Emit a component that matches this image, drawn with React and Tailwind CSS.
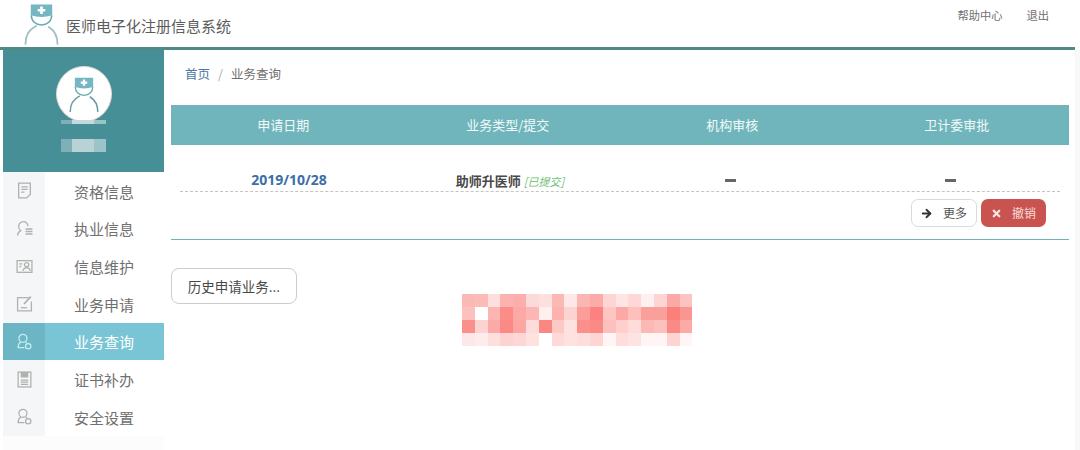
import React from "react";
import { ArrowRight, X } from "lucide-react";

const DoctorLogo = ({ className, stroke = "#9dbfc4" }) => (
  <svg viewBox="0 0 36 42" className={className} fill="none">
    <path d="M7 1h22v11q-11 3.500-22 0z" fill="#74b6c2" />
    <path d="M16.600 3h2.800v2.500h2.500v2.600h-2.500v2.500h-2.800V8.100h-2.500V5.500h2.500z" fill="#fff" />
    <path d="M7.500 12c0 6 4.500 10 10.500 10s10.500-4 10.500-10" stroke="#6aa9b4" strokeWidth="1.600" />
    <path d="M1.500 41.500c0-9.500 5-15.500 11-18.500" stroke={stroke} strokeWidth="1.800" strokeLinecap="round" />
    <path d="M34.500 41.500c0-9-3.500-14-9-17.500" stroke={stroke} strokeWidth="1.800" strokeLinecap="round" />
  </svg>
);

const iconProps = {
  viewBox: "0 0 16 16",
  fill: "none",
  stroke: "currentColor",
  strokeWidth: 1.200,
  className: "w-[17px] h-[17px]",
};

const DocIcon = () => (
  <svg {...iconProps}>
    <path d="M2.500 1h11v10.500l-3.500 3.500h-7.500z" />
    <path d="M5 4.500h6M5 7h6M5 9.500h3" />
  </svg>
);
const HeadListIcon = () => (
  <svg {...iconProps}>
    <path d="M1.500 14.500c0-2 1.500-3.700 3-4.500C3.300 9 2.500 7.500 2.500 6c0-2.500 2-4.500 4.300-4.500s4.200 1.800 4.500 4.300" />
    <path d="M9 8.500h6.500M9 10.800h6.500M9 13.200h6.500" strokeWidth="1.500" />
  </svg>
);
const CardIcon = () => (
  <svg {...iconProps}>
    <rect x="1" y="2.500" width="14" height="11" />
    <path d="M3 5.500h3M3 8h2" />
    <circle cx="10" cy="6.300" r="2" />
    <path d="M6.500 12c.5-2 2-3 3.500-3s3 1 3.500 3" />
  </svg>
);
const PenIcon = () => (
  <svg {...iconProps}>
    <path d="M12 2.500H1.500v12.500h13V6" />
    <path d="M7.500 8.500 14 1.500" strokeWidth="1.600" />
    <path d="M4.500 12h6" />
  </svg>
);
const UserGearIcon = () => (
  <svg {...iconProps}>
    <circle cx="6.500" cy="5" r="3.800" />
    <path d="M4.500 8.500C2.800 9.500 2 11 2 13.800h6" />
    <path d="M9 8.500c.8.400 1.300.900 1.700 1.500" />
    <circle cx="11.500" cy="12.500" r="2.500" />
  </svg>
);
const SaveIcon = () => (
  <svg {...iconProps}>
    <rect x="2" y="1" width="12" height="14" />
    <path d="M5 1v4.500h6V1" fill="currentColor" />
    <path d="M4.500 8.500h7M4.500 10.500h7M4.500 12.500h7" />
  </svg>
);

const menuItems = [
  { icon: <DocIcon />, label: "资格信息" },
  { icon: <HeadListIcon />, label: "执业信息" },
  { icon: <CardIcon />, label: "信息维护" },
  { icon: <PenIcon />, label: "业务申请" },
  { icon: <UserGearIcon />, label: "业务查询", active: true },
  { icon: <SaveIcon />, label: "证书补办" },
  { icon: <UserGearIcon />, label: "安全设置" },
];

const columns = ["申请日期", "业务类型/提交", "机构审核", "卫计委审批"];

// blurred block in the screenshot
const mosaic = [
  ["#fbb9b6", "#fbbcb9", "#fde0de", "#fcb3b0", "#fbaeab", "#fddada", "#fde0de", "#fbb8b5", "#fde8e7", "#fbb5b2", "#fbaba8", "#fdd5d3", "#fee4e3", "#fdd8d6", "#fef0ef", "#fdd5d3", "#fba9a6", "#fcc4c1"],
  ["#fcc0bd", "#ffffff", "#fcb5b2", "#fb8c88", "#fca9a6", "#fcb6b3", "#fff0ee", "#fcb3b0", "#fcd3d1", "#fb9d99", "#fb827e", "#fdc6c3", "#fca8a5", "#fdc0bd", "#fb9f9b", "#fb9f9b", "#fb7f7b", "#fb9592"],
  ["#fb8f8b", "#fdd3d1", "#fcaaa7", "#fb8a86", "#fca5a2", "#fddcda", "#fb8682", "#fcc9c6", "#fde2e0", "#fb8f8b", "#fb8a86", "#fcc1be", "#fdd0ce", "#fddcda", "#fcb8b5", "#fcc0bd", "#fb8a86", "#fcaaa7"],
  ["#fde8e7", "#fdeceb", "#fde0de", "#fdd3d1", "#fdd7d5", "#fde2e0", "#ffffff", "#fddad8", "#fde2e0", "#fddedc", "#fdd6d4", "#fff5f4", "#fddedc", "#fde3e2", "#fff5f4", "#fff5f4", "#fdd4d2", "#fff5f4"],
];

const App = () => {
  return (
    <div className="w-[1080px] h-[450px] overflow-hidden bg-white text-[#666] font-['Noto_Sans_CJK_SC','Noto_Sans',sans-serif]">
      {/* Header */}
      <header className="h-[47px] flex justify-between">
        <div className="flex items-start pl-[24px]">
          <DoctorLogo className="w-[35px] h-[42px] mt-[3px]" />
          <span className="ml-[7px] mt-[15px] text-[15px] leading-[22px] text-[#5c5c5c]">医师电子化注册信息系统</span>
        </div>
        <div className="flex gap-[24px] pr-[31px] pt-[7px] text-[11.250px] leading-[16px] text-[#707070]">
          <span>帮助中心</span>
          <span>退出</span>
        </div>
      </header>
      <div className="h-[3px] w-[1075px] bg-[#4f8a87]" />

      <div className="flex">
        {/* Sidebar */}
        <aside className="ml-[3px] w-[161px] h-[400px] shrink-0 bg-[#fcfcfc]">
          <div className="h-[122px] bg-[#478f96] flex flex-col items-center pt-[16px]">
            <div className="w-[56px] h-[56px] rounded-full bg-white border border-[#e6d5d8] flex items-center justify-center">
              <DoctorLogo className="w-[30px] h-[35px]" stroke="#6a9aa3" />
            </div>
            <div className="flex w-[45px] h-[4px] mt-[-2px]">
              <div className="w-[11px] bg-[#7fb0b5]" />
              <div className="w-[22px] bg-[#c4dadd]" />
              <div className="w-[12px] bg-[#9cc3c7]" />
            </div>
            <div className="flex w-[45px] h-[13px] mt-[15px]">
              <div className="w-[11px] bg-[#7fb0b5]" />
              <div className="w-[22px] bg-[#b8d2d5]" />
              <div className="w-[12px] bg-[#9cc3c7]" />
            </div>
          </div>
          <nav>
            {menuItems.map((item) => (
              <div
                key={item.label}
                className={`h-[37.700px] flex items-center ${item.active ? "bg-[#79c5d5] text-white" : "bg-white text-[#707070]"}`}
              >
                <div className={`w-[42px] h-full flex items-center justify-center ${item.active ? "bg-[#6bb5c4] text-[#c8eef4]" : "bg-[#f5f6f7] text-[#b0b0b0]"}`}>
                  {item.icon}
                </div>
                <span className="ml-[29px] mt-[2px] text-[15px]">{item.label}</span>
              </div>
            ))}
          </nav>
        </aside>

        {/* Main */}
        <main className="flex-1 pl-[7px] pr-[6px]">
          <div className="h-[55px] pt-[15px] pl-[14px] text-[12.500px] leading-[18px] text-[#707070]">
            <span className="text-[#4a78a0]">首页</span>
            <span className="mx-[8px] text-[#aaa]">/</span>
            <span>业务查询</span>
          </div>

          <div className="grid grid-cols-4 h-[40px] items-center bg-[#70b5bb] text-[#f2fafa] text-[13px] text-center">
            {columns.map((col) => (
              <span key={col}>{col}</span>
            ))}
          </div>

          <div className="h-[47px] mx-[9px] grid grid-cols-4 items-end pb-[1px] text-center border-b border-dashed border-[#c4c4c4]">
            <span className="text-[14px] font-bold text-[#3d6ea8] font-['Open_Sans',sans-serif] pr-[2px]">2019/10/28</span>
            <span className="text-[13px] font-bold text-[#484848] whitespace-nowrap">
              助师升医师 <i className="font-normal text-[11px] text-[#6fbf73]">[已提交]</i>
            </span>
            <div className="h-[22px] flex justify-center items-center pt-[2px]">
              <div className="w-[11px] h-[3px] bg-[#666]" />
            </div>
            <div className="h-[22px] flex justify-center items-center pt-[2px]">
              <div className="w-[11px] h-[3px] bg-[#666]" />
            </div>
          </div>

          <div className="h-[48px] pt-[7px] pr-[23px] flex justify-end gap-[4px] border-b border-[#6fb3b3]">
            <button className="w-[66px] h-[28px] flex items-center justify-between pl-[8px] pr-[9px] rounded-[7px] border border-[#d5dcdc] bg-white text-[12px] text-[#555]">
              <ArrowRight size={13} strokeWidth={3.500} className="text-[#333]" />
              <span>更多</span>
            </button>
            <button className="w-[65px] h-[28px] flex items-center justify-between pl-[10px] pr-[10px] rounded-[7px] bg-[#c9544f] text-[12px] text-[#f6dddc]">
              <X size={11} strokeWidth={5} className="text-[#f8e6e5]" />
              <span>撤销</span>
            </button>
          </div>

          <div className="flex items-start pt-[28px]">
            <button className="w-[126px] h-[36px] rounded-[8px] border border-[#ccc] bg-white text-[13.500px] text-[#484848]">
              历史申请业务...
            </button>
            <div className="ml-[165px] mt-[26px] blur-[0.6px] grid grid-cols-[repeat(18,12.800px)] grid-rows-[repeat(4,13px)]">
              {mosaic.flat().map((color, i) => (
                <div key={i} style={{ backgroundColor: color }} />
              ))}
            </div>
          </div>
        </main>
        <div className="w-[5px] h-[400px] shrink-0 bg-[#f8f8f8]" />
      </div>
    </div>
  );
};

export default App;
